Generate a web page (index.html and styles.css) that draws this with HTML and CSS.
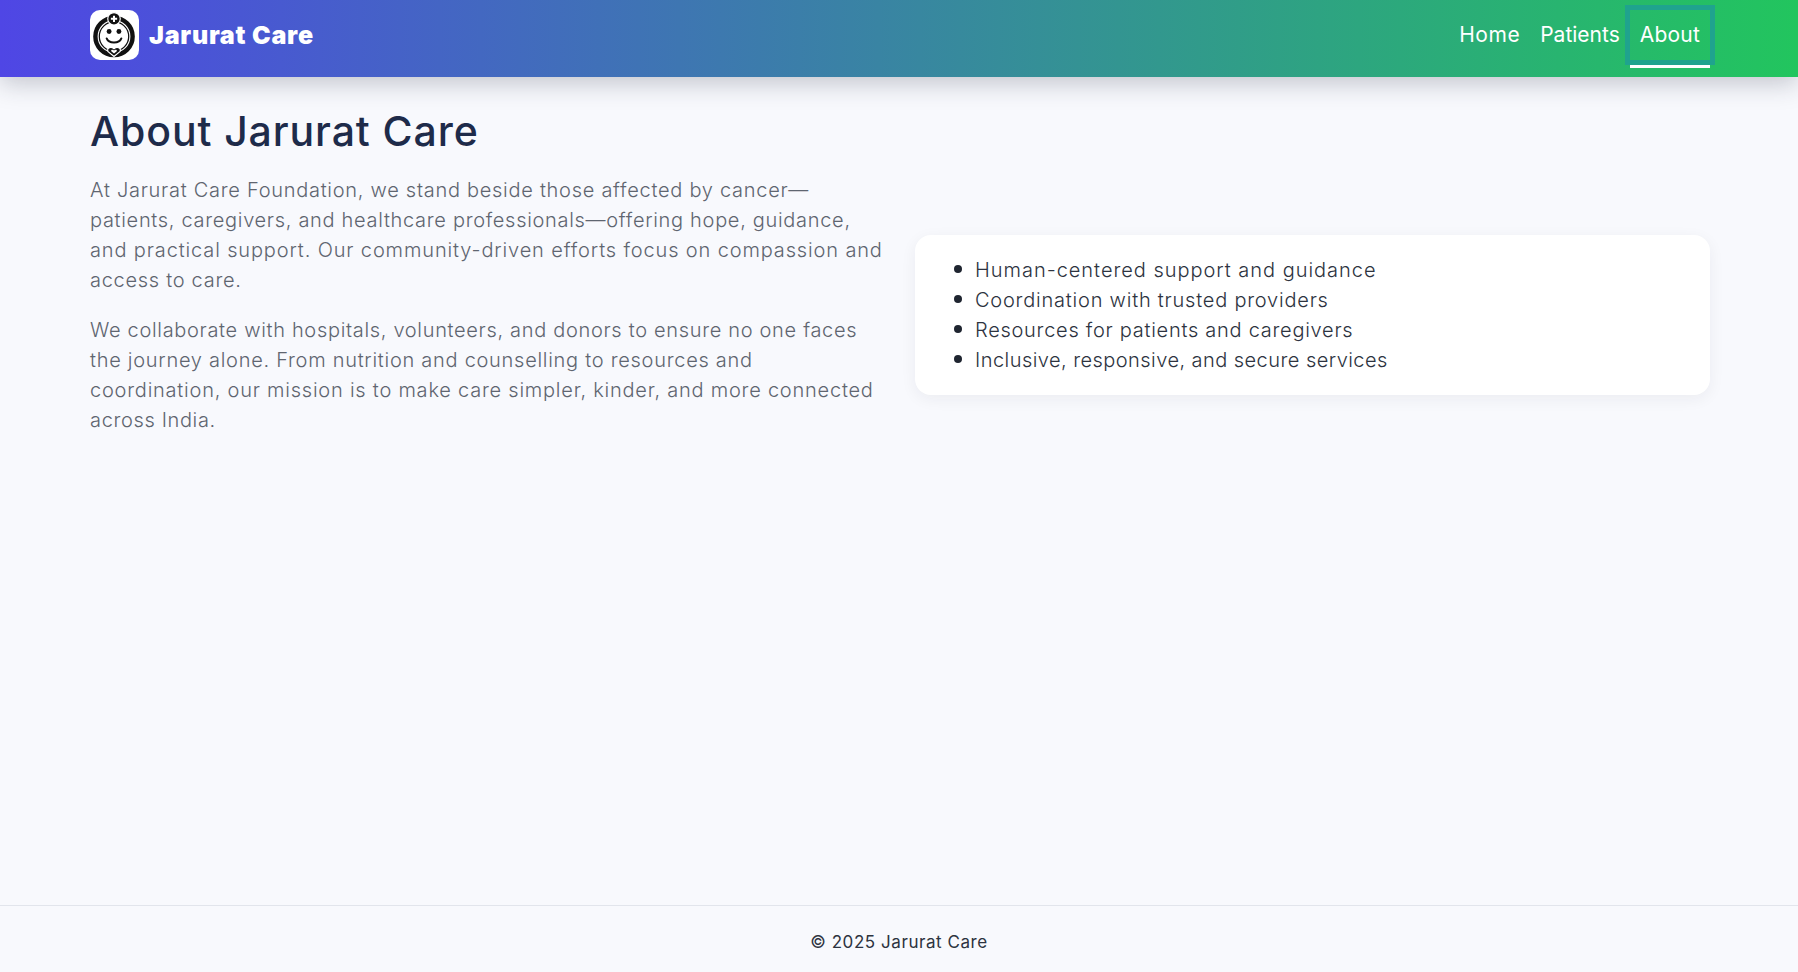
FILE: index.html
```html
<!DOCTYPE html>
<html lang="en">
<head>
<meta charset="utf-8">
<title>About Jarurat Care</title>
<link rel="stylesheet" href="styles.css">
</head>
<body>
<header class="site-header">
  <div class="container header-row">
    <a class="brand" href="#">
      <span class="brand-logo">
        <svg viewBox="0 0 50 50" width="50" height="50" aria-hidden="true">
          <circle cx="24.500" cy="26.500" r="19" fill="none" stroke="#111" stroke-width="4.500"/>
          <circle cx="24.500" cy="26.500" r="15" fill="none" stroke="#111" stroke-width="1.300"/>
          <circle cx="24.500" cy="8.500" r="6.400" fill="#111" stroke="#fff" stroke-width="1.200"/>
          <path d="M24.500 5.300v6.400M21.300 8.500h6.400" stroke="#fff" stroke-width="2" fill="none"/>
          <circle cx="19.500" cy="21.500" r="2.500" fill="#111"/>
          <circle cx="29.500" cy="21.500" r="2.500" fill="#111"/>
          <path d="M17 28.500c2 5.500 13 5.500 15 0" fill="none" stroke="#111" stroke-width="2" stroke-linecap="round"/>
          <path d="M24.500 47l-6-5c-2-3 2-6 6-3 4-3 8 0 6 3z" fill="#111" stroke="#fff" stroke-width="1.200"/>
          <path d="M24.500 44l-2.800-2.500c-.8-1.300 1.400-2.300 2.800-.8 1.400-1.500 3.600-.5 2.800.8z" fill="#fff"/>
        </svg>
      </span>
      <span class="brand-name">Jarurat Care</span>
    </a>
    <nav class="nav">
      <a class="nav-link" href="#">Home</a>
      <a class="nav-link" href="#">Patients</a>
      <a class="nav-link is-active" href="#">About</a>
    </nav>
  </div>
</header>
<main class="container main">
  <h1 class="title">About Jarurat Care</h1>
  <div class="columns">
    <div class="copy">
      <p><span>At Jarurat Care Foundation, we stand beside those affected by cancer—</span><span>patients, caregivers, and healthcare professionals—offering hope, guidance,</span><span>and practical support. Our community-driven efforts focus on compassion and</span><span>access to care.</span></p>
      <p><span>We collaborate with hospitals, volunteers, and donors to ensure no one faces</span><span>the journey alone. From nutrition and counselling to resources and</span><span>coordination, our mission is to make care simpler, kinder, and more connected</span><span>across India.</span></p>
    </div>
    <div class="card">
      <ul class="card-list">
        <li>Human-centered support and guidance</li>
        <li>Coordination with trusted providers</li>
        <li>Resources for patients and caregivers</li>
        <li>Inclusive, responsive, and secure services</li>
      </ul>
    </div>
  </div>
</main>
<footer class="site-footer">© 2025 Jarurat Care</footer>
</body>
</html>
```
FILE: styles.css
```css
* { box-sizing: border-box; }
html, body { height: 100%; }
body {
  margin: 0;
  min-height: 972px;
  display: flex;
  flex-direction: column;
  background: #f8f9fd;
  color: #2d3340;
  font-family: "Inter", "Noto Sans", sans-serif;
}
.container { width: 1620px; margin-left: 90px; }
.site-header {
  height: 77px;
  background: linear-gradient(90deg, #4f46e5, #22c55e);
  box-shadow: 0 6px 24px rgba(30, 41, 59, 0.25);
  position: relative;
  z-index: 1;
}
.header-row {
  height: 77px;
  padding-bottom: 7px;
  display: flex;
  align-items: center;
  justify-content: space-between;
}
.brand { display: flex; align-items: center; gap: 10px; color: #fff; text-decoration: none; }
.brand-logo {
  width: 49px;
  height: 50px;
  background: #fff;
  border-radius: 10px;
  display: flex;
  align-items: center;
  justify-content: center;
  overflow: hidden;
}
.brand-name { font-size: 25px; font-weight: 900; letter-spacing: 0.75px; }
.nav { display: flex; }
.nav-link {
  position: relative;
  display: block;
  padding: 10px;
  font-size: 21px;
  line-height: 30px;
  color: #fff;
  text-decoration: none;
}
.nav-link:nth-child(1) { letter-spacing: 0.55px; }
.nav-link:nth-child(2) { letter-spacing: 0; }
.nav-link:nth-child(3) { letter-spacing: 0.2px; }
.nav-link.is-active { outline: 5px solid #1fa38e; }
.nav-link.is-active::after {
  content: "";
  position: absolute;
  left: 0;
  right: 0;
  bottom: -8px;
  height: 3px;
  background: #fff;
}
.main { flex: 1; padding-top: 28px; }
.title {
  margin: 0 0 18px;
  font-size: 41px;
  line-height: 52px;
  font-weight: 500;
  letter-spacing: 0.9px;
  color: #1e2b4a;
}
.columns {
  display: grid;
  grid-template-columns: 1fr 1fr;
  gap: 30px;
  align-items: center;
}
.copy p {
  margin: 0 0 20px;
  font-size: 20px;
  font-weight: 350;
  line-height: 30px;
  color: #5f6570;
}
.copy span { display: block; white-space: nowrap; letter-spacing: 0.72px; }
.copy p:nth-child(1) span:nth-child(2) { letter-spacing: 0.69px; }
.copy p:nth-child(1) span:nth-child(3) { letter-spacing: 0.86px; }
.copy p:nth-child(1) span:nth-child(4) { letter-spacing: 0.71px; }
.copy p:nth-child(2) span:nth-child(1) { letter-spacing: 0.68px; }
.copy p:nth-child(2) span:nth-child(2) { letter-spacing: 0.72px; }
.copy p:nth-child(2) span:nth-child(3) { letter-spacing: 0.77px; }
.copy p:nth-child(2) span:nth-child(4) { letter-spacing: 0.64px; }
.card {
  background: #fff;
  border-radius: 16px;
  padding: 20px;
  box-shadow: 0 4px 16px rgba(30, 41, 59, 0.06);
}
.card-list {
  margin: 0;
  padding: 0 0 0 19px;
  list-style: none;
  font-size: 20px;
  font-weight: 350;
  line-height: 30px;
}
.card-list li { display: flex; align-items: center; }
.card-list li::before {
  content: "";
  flex: none;
  width: 8px;
  height: 8px;
  margin: 0 13px 2px 0;
  border-radius: 50%;
  background: #1f2530;
}
.card-list li:nth-child(1) { letter-spacing: 0.97px; }
.card-list li:nth-child(2) { letter-spacing: 0.78px; }
.card-list li:nth-child(3) { letter-spacing: 0.73px; }
.card-list li:nth-child(4) { letter-spacing: 0.45px; }
.site-footer {
  height: 67px;
  padding-top: 6px;
  border-top: 1px solid #e2e5ec;
  display: flex;
  align-items: center;
  justify-content: center;
  font-size: 17px;
  letter-spacing: 0.56px;
  color: #2d3340;
}
```
